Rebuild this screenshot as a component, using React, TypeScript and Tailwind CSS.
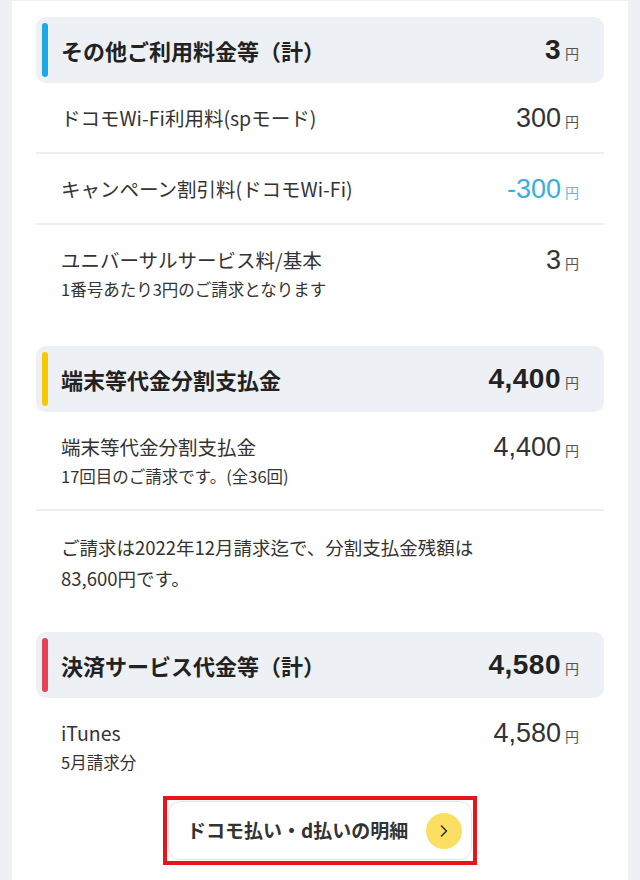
import React from 'react';

type Row = {
    label: string;
    amount: string;
    note?: string;
    negative?: boolean;
    divider?: boolean;
};

type Section = {
    title: string;
    total: string;
    bar: string;
    rows: Row[];
    message?: string[];
};

const sections: Section[] = [
    {
        title: 'その他ご利用料金等（計）',
        total: '3',
        bar: 'bg-[#1ea8e6]',
        rows: [
            { label: 'ドコモWi-Fi利用料(spモード)', amount: '300', divider: true },
            { label: 'キャンペーン割引料(ドコモWi-Fi)', amount: '-300', negative: true, divider: true },
            { label: 'ユニバーサルサービス料/基本', amount: '3', note: '1番号あたり3円のご請求となります' },
        ],
    },
    {
        title: '端末等代金分割支払金',
        total: '4,400',
        bar: 'bg-[#f5c800]',
        rows: [
            { label: '端末等代金分割支払金', amount: '4,400', note: '17回目のご請求です。(全36回)', divider: true },
        ],
        message: ['ご請求は2022年12月請求迄で、分割支払金残額は', '83,600円です。'],
    },
    {
        title: '決済サービス代金等（計）',
        total: '4,580',
        bar: 'bg-[#e8425a]',
        rows: [
            { label: 'iTunes', amount: '4,580', note: '5月請求分' },
        ],
    },
];

const numFont = "font-['Liberation_Sans',Arial,sans-serif]";

const Amount: React.FC<{ value: string; bold?: boolean; negative?: boolean }> = ({ value, bold, negative }) => (
    <div className="flex items-baseline gap-[4px] shrink-0">
        <span
            className={`${numFont} leading-[28px] ${bold ? 'text-[28px] font-bold tracking-[0.5px] text-[#222]' : 'text-[27px] font-normal'} ${
                negative ? 'text-[#3aaedc]' : bold ? '' : 'text-[#333]'
            }`}
        >
            {value}
        </span>
        <span className={`text-[14px] ${negative ? 'text-[#5dbde3]' : 'text-[#555]'}`}>円</span>
    </div>
);

const SectionHeader: React.FC<{ section: Section }> = ({ section }) => (
    <div className="flex h-[66px] items-stretch rounded-[10px] bg-[#edf0f4] pl-[6px] pr-[25px]">
        <div className={`my-[6px] w-[6px] rounded-full ${section.bar}`} />
        <div className="flex flex-1 items-center justify-between pl-[13px]">
            <h2 className="text-[22px] font-bold text-[#222]">{section.title}</h2>
            <Amount value={section.total} bold />
        </div>
    </div>
);

const ItemRow: React.FC<{ row: Row }> = ({ row }) => (
    <div className={`${row.divider ? 'border-b-2 border-[#eceef1]' : ''}`}>
        <div className={`flex justify-between px-[25px] pt-[21px] ${row.note ? (row.divider ? 'pb-[18px]' : 'pb-[17px]') : 'pb-[20px]'}`}>
            <div>
                <p className="text-[19.5px] leading-[28px] text-[#333]">{row.label}</p>
                {row.note && <p className="text-[16.5px] leading-[30px] text-[#333]">{row.note}</p>}
            </div>
            <Amount value={row.amount} negative={row.negative} />
        </div>
    </div>
);

export default function App() {
    return (
        <div className="min-h-[880px] bg-[#eef0f3] px-[12px] pt-[1px] font-['Noto_Sans_CJK_JP',sans-serif]">
            <div className="bg-white px-[24px] pt-[16px] pb-[20px]">
                <div className="flex flex-col gap-[25px]">
                    {sections.map((section) => (
                        <section key={section.title}>
                            <SectionHeader section={section} />
                            {section.rows.map((row) => (
                                <ItemRow key={row.label} row={row} />
                            ))}
                            {section.message && (
                                <div className="px-[25px] pt-[21px] pb-[13px] text-[18.5px] leading-[31px] text-[#333]">
                                    {section.message.map((line) => (
                                        <p key={line}>{line}</p>
                                    ))}
                                </div>
                            )}
                        </section>
                    ))}
                </div>
                <div className="mt-[2px] flex justify-center">
                    <div className="border-4 border-[#e8141b] p-[1px]">
                        <button className="flex h-[59px] w-[304px] items-center justify-between rounded-[12px] border border-[#e4e6ea] bg-white pl-[18px] pr-[9px]">
                            <span className="text-[19px] font-bold text-[#333]">ドコモ払い・d払いの明細</span>
                            <span className="flex h-[36px] w-[36px] items-center justify-center rounded-full bg-[#fadf63]">
                                <svg width="12" height="14" viewBox="0 0 12 14" fill="none">
                                    <path d="M3.5 2 L8.5 7 L3.5 12" stroke="#333" strokeWidth="1.6" strokeLinecap="round" strokeLinejoin="round" />
                                </svg>
                            </span>
                        </button>
                    </div>
                </div>
            </div>
        </div>
    );
}
